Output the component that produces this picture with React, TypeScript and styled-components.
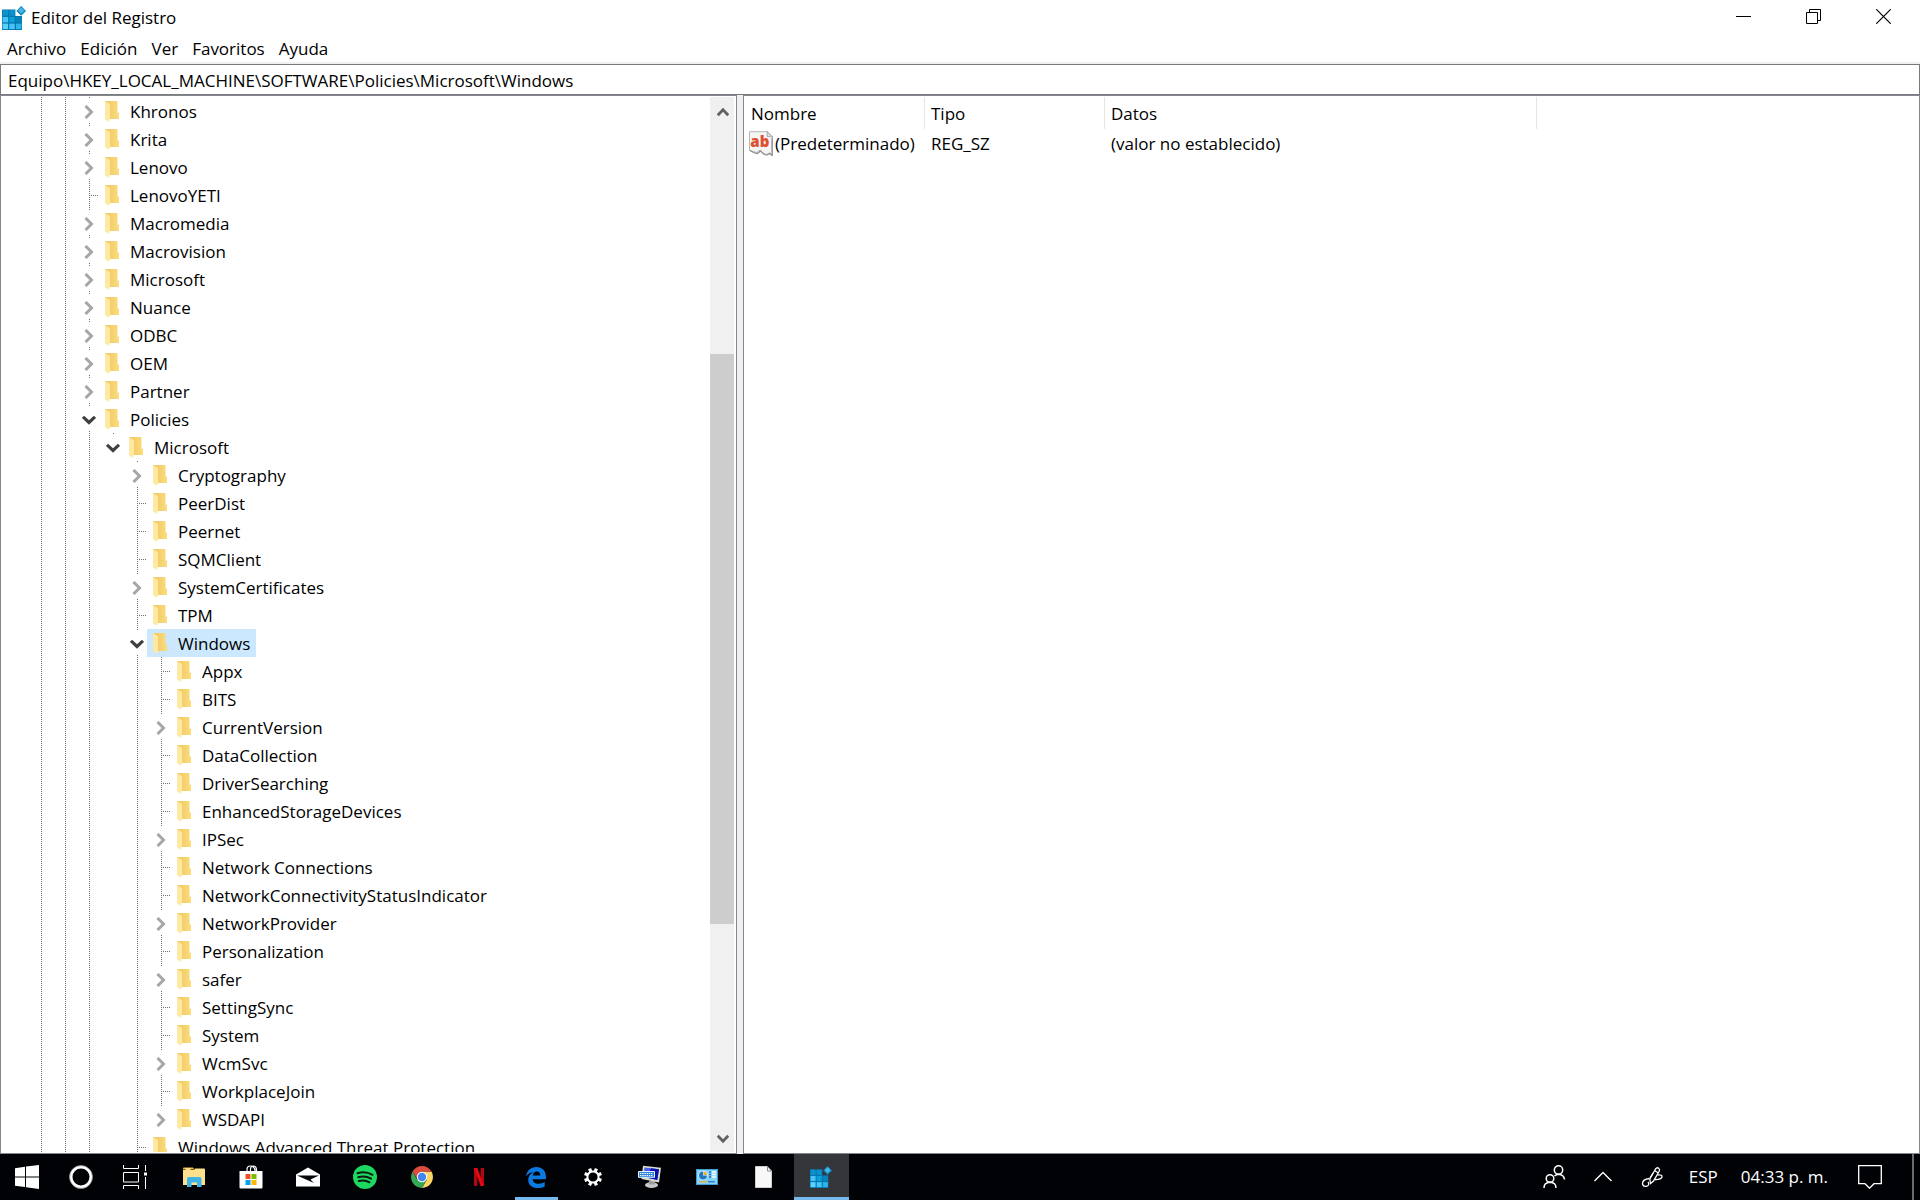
import React from "react";
import styled, { createGlobalStyle, css } from "styled-components";

const GlobalStyle = createGlobalStyle`
  *, *::before, *::after { box-sizing: border-box; }
  html, body, #root { height: 100%; }
  body {
    margin: 0;
    overflow: hidden;
    background: #fff;
    color: #000;
    font: 17px/24px "Open Sans", "Noto Sans", "Liberation Sans", sans-serif;
  }
  button, input { font: inherit; color: inherit; }
  button { border: 0; margin: 0; padding: 0; background: none; }
  svg { display: block; flex: none; }
`;

/* ---------- layout ---------- */

const Desktop = styled.div`
  display: flex;
  flex-direction: column;
  height: 100vh;
`;

const Window = styled.main`
  display: flex;
  flex-direction: column;
  flex: 1;
  min-height: 0;
`;

const TitleBar = styled.header`
  display: flex;
  align-items: center;
  gap: 5px;
  height: 35px;
  padding-left: 2px;
`;

const Title = styled.h1`
  flex: 1;
  margin: 0;
  font-size: 17px;
  font-weight: 400;
`;

const WindowControls = styled.div`
  display: flex;
  align-self: flex-start;
  padding-right: 2px;
`;

const ControlButton = styled.button`
  display: grid;
  place-items: center;
  width: 70px;
  height: 33px;
`;

const MenuBar = styled.nav`
  display: flex;
  align-items: center;
  height: 27px;
  padding-top: 1px;
`;

const MenuButton = styled.button`
  padding: 0 7px;
`;

const AddressRow = styled.div`
  padding-top: 2px;
  background: #f0f0f0;
`;

const AddressInput = styled.input`
  display: block;
  width: 100%;
  height: 31px;
  padding: 2px 7px 0;
  border: 1px solid #7a7a7a;
  border-radius: 0;
  background: #fff;
  outline: 0;
`;

const Panes = styled.div`
  display: grid;
  grid-template-columns: minmax(0, 737px) 6px minmax(0, 1fr);
  flex: 1;
  min-height: 0;
  background: #f0f0f0;
`;

const pane = css`
  min-height: 0;
  overflow: hidden;
  border: 1px solid #828790;
  background: #fff;
`;

const TreePane = styled.section`
  ${pane}
  display: flex;
  padding: 1px 2px 1px 0;
`;

const ValuesPane = styled.section`
  ${pane}
  grid-column: 3;
  padding-top: 1px;
`;

/* ---------- tree ---------- */

const Tree = styled.ul`
  flex: 1;
  min-width: 0;
  margin: 0;
  padding: 0 0 0 26px;
  overflow: hidden;
  list-style: none;
`;

const TreeRow = styled.li`
  display: flex;
  height: 28px;
`;

type GuideKind = "empty" | "through" | "branch" | "toggle" | "lastToggle";

const vDots = "repeating-linear-gradient(to bottom, #6e6e6e 0 1px, transparent 1px 2px)";
const hDots = "repeating-linear-gradient(to right, #6e6e6e 0 1px, transparent 1px 2px)";

const guides: Record<GuideKind, string> = {
  empty: "none",
  through: `${vDots} 14px 0 / 1px 28px no-repeat`,
  branch: `${vDots} 14px 0 / 1px 28px no-repeat, ${hDots} 16px 14px / 10px 1px no-repeat`,
  toggle: `${vDots} 14px 0 / 1px 2px no-repeat, ${vDots} 14px 26px / 1px 2px no-repeat`,
  lastToggle: `${vDots} 14px 0 / 1px 2px no-repeat`,
};

const Guide = styled.span<{ $kind: GuideKind }>`
  display: flex;
  flex: none;
  align-items: center;
  justify-content: center;
  width: 24px;
  padding: 1px 0 0 3px;
  background: ${(p) => guides[p.$kind]};
`;

const Toggle = styled.button`
  display: grid;
  place-items: center;
  width: 14px;
  height: 14px;
`;

const NodeButton = styled.button<{ $selected: boolean }>`
  display: flex;
  align-items: center;
  gap: 11px;
  height: 28px;
  padding: 0 6px;
  white-space: nowrap;
  background: ${(p) => (p.$selected ? "#cce8ff" : "transparent")};
`;

const NodeName = styled.span`
  padding-top: 2px;
`;

/* ---------- scrollbar ---------- */

const ScrollBar = styled.div`
  display: flex;
  flex-direction: column;
  width: 24px;
  background: #f0f0f0;
`;

const ScrollButton = styled.button`
  display: grid;
  place-items: center;
  height: 28px;
  padding: 1px 0 0 1px;
`;

const ScrollPart = styled.div<{ $size: number; $thumb?: boolean }>`
  flex: ${(p) => p.$size} 0 0;
  background: ${(p) => (p.$thumb ? "#cdcdcd" : "transparent")};
`;

/* ---------- values ---------- */

const ValuesTable = styled.table`
  width: 100%;
  table-layout: fixed;
  border-collapse: separate;
  border-spacing: 0;
  text-align: left;
`;

const Col = styled.col<{ $width?: number }>`
  width: ${(p) => (p.$width ? `${p.$width}px` : "auto")};
`;

const HeadCell = styled.th`
  height: 32px;
  padding: 2px 6px 0;
  border-right: 1px solid #e5e5e5;
  font-weight: 400;
  &:first-child { padding-left: 7px; }
  &:last-child { border-right: 0; }
`;

const Cell = styled.td`
  height: 29px;
  padding: 0 6px;
  white-space: nowrap;
`;

const NameCell = styled(Cell)`
  padding: 0 0 0 5px;
`;

const ValueName = styled.span`
  display: flex;
  align-items: center;
  gap: 1px;
`;

/* ---------- taskbar ---------- */

const TaskBar = styled.footer`
  display: flex;
  flex: none;
  height: 46px;
  background: #010206;
  color: #fff;
`;

const SystemButton = styled.button`
  display: grid;
  place-items: center;
  width: 54px;
`;

const Apps = styled.div`
  display: flex;
  flex: 1;
  gap: 2px;
  padding-left: 5px;
`;

const AppButton = styled.button<{ $state?: "open" | "active" }>`
  display: grid;
  place-items: center;
  width: 55px;
  padding-right: 2px;
  background:
    linear-gradient(#76b9ed, #76b9ed) center bottom /
      ${(p) => (p.$state === "active" ? "100% 3px" : p.$state === "open" ? "43px 3px" : "0 0")} no-repeat,
    ${(p) => (p.$state === "active" ? "#35363a" : "transparent")};
`;

const Tray = styled.div`
  display: flex;
`;

const TrayButton = styled.button`
  display: flex;
  align-items: center;
  padding: 0 14px;
`;

const TrayText = styled.button`
  padding: 0 0 0 11px;
`;

const Language = styled(TrayText)`
  padding-right: 12px;
`;

const NotificationButton = styled.button`
  display: grid;
  place-items: center;
  width: 84px;
`;

const ShowDesktop = styled.button`
  width: 8px;
  border-left: 2px solid #6b6b6b;
`;

/* ---------- icons ---------- */

const FolderIcon = () => (
  <svg width="14" height="21" viewBox="0 0 14 21" aria-hidden="true">
    <defs>
      <linearGradient id="folderBack" x1="0" x2="1">
        <stop offset="0" stopColor="#efc75e" />
        <stop offset="1" stopColor="#fbdc7e" />
      </linearGradient>
    </defs>
    <path d="M0 0h12.5v11.5H14V18H0z" fill="url(#folderBack)" />
    <path d="M0 0 5 3.2V16.5L4 21 0 18z" fill="#ffe9a2" />
  </svg>
);

const CollapsedIcon = () => (
  <svg width="10" height="14" viewBox="0 0 10 14" aria-hidden="true">
    <path d="M1.5 1 7.5 7l-6 6" fill="none" stroke="#a6a6a6" strokeWidth="3" />
  </svg>
);

const ExpandedIcon = () => (
  <svg width="14" height="10" viewBox="0 0 14 10" aria-hidden="true">
    <path d="M1 1.8 7 7.5l6-5.7" fill="none" stroke="#404040" strokeWidth="3.2" />
  </svg>
);

const ScrollArrow = ({ down }: { down?: boolean }) => (
  <svg width="12" height="10" viewBox="0 0 12 10" aria-hidden="true">
    <path d={down ? "M.8 1.8 6 7.2l5.2-5.4" : "M.8 8.2 6 2.8l5.2 5.4"} fill="none" stroke="#606060" strokeWidth="2.8" />
  </svg>
);

const cubes = [
  [0, 4, "#0a93cf"], [6.7, 4, "#0a93cf"],
  [0, 10.7, "#45c4f5"], [6.7, 10.7, "#0aa0dc"], [13.4, 10.7, "#0683b8"],
  [0, 17.4, "#5ad0fa"], [6.7, 17.4, "#45c4f5"], [13.4, 17.4, "#2fb4e8"],
] as const;

const RegistryIcon = ({ size }: { size: number }) => (
  <svg width={size} height={size} viewBox="0 0 24 24" aria-hidden="true">
    <path d="M0 3.5h13.4v6.6H20V24H0z" fill="#0475ae" />
    {cubes.map(([x, y, fill]) => (
      <rect key={`${x}-${y}`} x={x + 0.6} y={y + 0.2} width="5.5" height="5.5" fill={fill} />
    ))}
    <path d="M19.2 0 24 4.9l-4.8 4.9-4.8-4.9z" fill="#0a84bd" />
    <path d="m19.2 1.2 3.3 3.4-3.3 3.2-3.3-3.2z" fill="#48b4e4" />
  </svg>
);

const StringValueIcon = () => (
  <svg width="25" height="25" viewBox="0 0 25 25" aria-hidden="true">
    <path d="M.5.7h17.7l5.3 5v18.6l-2.8-2.4-3 1.7-3.2-1.2-3.2-3.4-3.6 2.6-3.4-1.1L.5 19.6z" fill="#f5f5f5" stroke="#b5b5b5" />
    <path d="m1 19.5 3.5 2 3.8 1 3.2-2.5 3.2 3 3 1.2 3-1.8 2.3 2.2V7" fill="none" stroke="#8f8f8f" strokeWidth="1.2" />
    <path d="M18.2.7v5h5.3z" fill="#ddd" stroke="#9d9d9d" strokeWidth=".8" />
    <text x="10.8" y="15.5" textAnchor="middle" fontFamily="Open Sans, sans-serif" fontSize="15" fontWeight="800" fill="#dd5030">ab</text>
  </svg>
);

const StartIcon = () => (
  <svg width="24" height="24" viewBox="0 0 24 24" fill="#fff" aria-hidden="true">
    <path d="M0 3.2 10 1.8v9.7H0zM11 1.6 24 0v11.5H11zM0 12.5h10v9.6L0 20.7zM11 12.5h13V24l-13-1.7z" />
  </svg>
);

const CortanaIcon = () => (
  <svg width="24" height="24" viewBox="0 0 24 24" fill="none" aria-hidden="true">
    <circle cx="12" cy="12" r="10" stroke="#fff" strokeWidth="3" />
    <circle cx="12" cy="12" r="11.5" stroke="#8a8a8a" strokeWidth=".8" />
  </svg>
);

const TaskViewIcon = () => (
  <svg width="24" height="24" viewBox="0 0 24 24" fill="none" stroke="#fff" aria-hidden="true">
    <path d="M.5 0v3.500h15V0M.5 24v-3.500h15V24M.5 7.500h15v9.500H.5zM22.500 0v6M22.500 12v12" />
    <rect x="21" y="7.500" width="3" height="3" fill="#fff" stroke="none" />
  </svg>
);

const ExplorerIcon = () => (
  <svg width="22" height="20" viewBox="0 0 22 20" aria-hidden="true">
    <path d="M0 1.500Q0 .5 1 .5h9l1.500 2H0z" fill="#f5b921" />
    <rect x="2.500" y="1.300" width="5" height="1.500" fill="#fff3c4" />
    <path d="M0 3h11l1-1.500h9q1 0 1 1V18H0z" fill="#ffe08a" />
    <path d="M4 20v-8q0-2 2-2h10.500q2 0 2 2v8H14v-4.500H8.500V20z" fill="#3fb4e8" />
  </svg>
);

const StoreIcon = () => (
  <svg width="24" height="24" viewBox="0 0 24 24" aria-hidden="true">
    <path d="M8 7V4.500Q8 1 11.500 1T16 5v2M11.500 6V4q0-2.500 2.500-3 3.500 0 3.500 4v2" fill="none" stroke="#fff" strokeWidth="1.200" />
    <path d="M.5 6h23v16.500q0 1-1 1h-21q-1 0-1-1z" fill="#fff" />
    <path d="M6.500 9h5v5h-5z" fill="#f25022" />
    <path d="M12.500 9h5v5h-5z" fill="#7fba00" />
    <path d="M6.500 15h5v5h-5z" fill="#00a4ef" />
    <path d="M12.500 15h5v5h-5z" fill="#ffb900" />
  </svg>
);

const MailIcon = () => (
  <svg width="24" height="20" viewBox="0 0 24 20" aria-hidden="true">
    <path d="M0 7.500 12 .5l12 7V19.500H0z" fill="#fff" />
    <path d="M1 8.500h22L14.500 12.500 18 16z" fill="#05060a" />
  </svg>
);

const SpotifyIcon = () => (
  <svg width="24" height="24" viewBox="0 0 24 24" aria-hidden="true">
    <circle cx="12" cy="12" r="12" fill="#1ed760" />
    <path d="M4.500 8.200q8-2.300 15 1.600M5.200 12.200q7-2 12.800 1.500M5.800 16q6-1.500 10.700 1.300" fill="none" stroke="#0b1a10" strokeWidth="2" strokeLinecap="round" />
  </svg>
);

const ChromeIcon = () => (
  <svg width="22" height="22" viewBox="0 0 22 22" aria-hidden="true">
    <path d="M11 11V5.500h9.500A11 11 0 0 1 11 22l4.800-8.300z" fill="#fdd663" />
    <path d="M11 11 15.800 13.700 11 22A11 11 0 0 1 1.500 5.500L6.300 13.700z" fill="#34a853" />
    <path d="M1.500 5.500A11 11 0 0 1 20.500 5.500H11L6 12.500z" fill="#dd4b3e" />
    <circle cx="11" cy="11" r="5.200" fill="#fff" />
    <circle cx="11" cy="11" r="4.200" fill="#4285f4" />
  </svg>
);

const NetflixIcon = () => (
  <svg width="10" height="18" viewBox="0 0 10 18" aria-hidden="true">
    <path d="M0 0h3.300v18L0 18zM6.700 0H10v18H6.700z" fill="#b1060f" />
    <path d="M0 0h3.300L10 18H6.700z" fill="#e50914" />
  </svg>
);

const EdgeIcon = () => (
  <svg width="20" height="21" viewBox="0 0 20 21" aria-hidden="true">
    <path d="M0 9.300C.8 3.500 5 0 10.300 0 16.500 0 20 4.200 20 10v2.300H6.600c.2 3.200 2.900 4.500 5.900 4.500 2.300 0 4.400-.6 6.200-1.700v4.300C16.600 20.500 14.200 21 11.700 21 6 21 2.200 17.700 2.200 12.900c0-3.600 2-6.500 5.300-8C4.500 5.200 1.800 6.800 0 9.300zm6.800-.9h7.500c0-2.500-1.200-3.900-3.500-3.900-2.200 0-3.500 1.500-4 3.900z" fill="#0a7ae0" />
  </svg>
);

const SettingsIcon = () => (
  <svg width="20" height="20" viewBox="0 0 20 20" fill="none" stroke="#fff" aria-hidden="true">
    <circle cx="10" cy="10" r="5.600" strokeWidth="2" />
    {[22.5, 67.5, 112.5, 157.5, 202.5, 247.5, 292.5, 337.5].map((a) => (
      <path key={a} d="M10 1v3.200" strokeWidth="3.200" transform={`rotate(${a} 10 10)`} />
    ))}
  </svg>
);

const KeyboardIcon = () => (
  <svg width="24" height="24" viewBox="0 0 24 24" aria-hidden="true">
    <ellipse cx="13.500" cy="20" rx="6.500" ry="3" fill="#c9c9c9" />
    <path d="M11 16h6v3.500h-6z" fill="#9c9c9c" />
    <path d="m5 .8 18 2-2 14.700L3.500 14z" fill="#dddad0" />
    <path d="m6.500 2.500 14.500 1.700L19.300 15 5.500 12z" fill="#4a5cf0" />
    <path d="m13 3.300 8 .9L19.300 15l-10-2.200z" fill="#0a12a8" />
    <path d="M.5 6.500h16v5.800H.5z" fill="#2c86d8" stroke="#e8f3ff" />
    <path d="M2 8.500h13M2 10.500h13" stroke="#fff" strokeWidth="1.200" strokeDasharray="1.400 .8" />
  </svg>
);

const ControlPanelIcon = () => (
  <svg width="22" height="16" viewBox="0 0 22 16" aria-hidden="true">
    <rect x=".5" y=".5" width="21" height="15" fill="#86d3fa" stroke="#3d9fd8" />
    <circle cx="7" cy="6.500" r="4.800" fill="#d9f1ff" />
    <path d="M7 6.500V2.500a4 4 0 0 0 0 8 4 4 0 0 0 4-4z" fill="#2178c4" />
    <path d="M7.500 2.500a4 4 0 0 1 3.500 3.500H7.500z" fill="#f7a823" />
    <path d="M13 3h2M13 5.500h2M13 8h2" stroke="#1f6fb8" strokeWidth="1.400" />
    <path d="M16 3h4M16 5.500h4M16 8h4" stroke="#fff" strokeWidth="1.400" />
    <path d="M3 12.800h8" stroke="#f7a823" strokeWidth="1.200" />
    <path d="M12 12.800h7" stroke="#1f6fb8" strokeWidth="1.200" />
  </svg>
);

const DocumentIcon = () => (
  <svg width="17" height="22" viewBox="0 0 17 22" aria-hidden="true">
    <path d="M.5.5h12l4 4.500v16.500H.5z" fill="#f8f8f8" stroke="#cfcfcf" />
    <path d="M12.500.5v4.500h4z" fill="#fff" stroke="#7d7d7d" strokeWidth=".9" />
  </svg>
);

const PeopleIcon = () => (
  <svg width="24" height="24" viewBox="0 0 24 24" fill="none" stroke="#fff" strokeWidth="1.500" aria-hidden="true">
    <circle cx="16.500" cy="5" r="4.200" />
    <circle cx="8" cy="13.500" r="3.800" />
    <path d="M2 23q0-5.500 6-5.700Q14 17.500 14 23M12.500 11q2-1.800 4-1.800 5.500.3 6 5.300" />
  </svg>
);

const ChevronUpIcon = () => (
  <svg width="18" height="12" viewBox="0 0 18 12" fill="none" stroke="#fff" strokeWidth="1.400" aria-hidden="true">
    <path d="m.5 10 8.500-8.500 8.500 8.500" />
  </svg>
);

const PenIcon = () => (
  <svg width="24" height="24" viewBox="0 0 24 24" fill="none" stroke="#fff" strokeWidth="1.300" aria-hidden="true">
    <path d="M10.500 18.500 9.800 14 15.500 4q1.500-2 3.200-.8 1.500 1.200.5 3L13.500 16z" />
    <path d="M14.500 5.500 18 7.700M13 8l-3 5" />
    <path d="M9.500 13.500C5 14 2.500 16 2.500 18.500c0 3 4.500 4 6 1.500.6-1 .3-2-.5-3M17.500 10c3.500-.5 5 .5 4.500 2-.6 1.800-4 2.700-7.500 2.500" />
  </svg>
);

const NotificationIcon = () => (
  <svg width="24" height="24" viewBox="0 0 24 24" fill="none" stroke="#fff" strokeWidth="1.300" aria-hidden="true">
    <path d="M.7.700h22.600v18H16l-4.500 4.500-4.500-4.500H.7z" />
  </svg>
);

/* ---------- data ---------- */

interface KeyNode {
  name: string;
  depth: number;
  state?: "closed" | "open";
}

const sub = (depth: number, names: string): KeyNode[] =>
  names.split("|").map((raw) => {
    const mark = raw[0];
    if (mark === "+") return { name: raw.slice(1), depth, state: "closed" };
    if (mark === "-") return { name: raw.slice(1), depth, state: "open" };
    return { name: raw, depth };
  });

/* "+" marks a collapsed key, "-" an expanded one. */
const keys: KeyNode[] = [
  ...sub(2, "+Khronos|+Krita|+Lenovo|LenovoYETI|+Macromedia|+Macrovision|+Microsoft|+Nuance|+ODBC|+OEM|+Partner|-Policies"),
  ...sub(3, "-Microsoft"),
  ...sub(4, "+Cryptography|PeerDist|Peernet|SQMClient|+SystemCertificates|TPM|-Windows"),
  ...sub(
    5,
    "Appx|BITS|+CurrentVersion|DataCollection|DriverSearching|EnhancedStorageDevices|+IPSec|Network Connections|NetworkConnectivityStatusIndicator|+NetworkProvider|Personalization|+safer|SettingSync|System|+WcmSvc|WorkplaceJoin|+WSDAPI"
  ),
  ...sub(4, "Windows Advanced Threat Protection"),
];

/* Levels whose last child has been shown carry no line further down. */
const isLast = (i: number) => {
  const { depth } = keys[i];
  if (depth === 3) return true;
  if (depth < 5) return false;
  return keys[i + 1].depth < depth;
};

const guidesFor = (i: number): GuideKind[] => {
  const { depth, state } = keys[i];
  const out: GuideKind[] = [];
  for (let level = 0; level < depth; level++) out.push(level === 3 ? "empty" : "through");
  out.push(state ? (isLast(i) ? "lastToggle" : "toggle") : "branch");
  return out;
};

const SELECTED = 19;

const apps: { label: string; icon: React.ReactNode; state?: "open" | "active" }[] = [
  { label: "Explorador de archivos", icon: <ExplorerIcon /> },
  { label: "Microsoft Store", icon: <StoreIcon /> },
  { label: "Correo", icon: <MailIcon /> },
  { label: "Spotify", icon: <SpotifyIcon /> },
  { label: "Google Chrome", icon: <ChromeIcon /> },
  { label: "Netflix", icon: <NetflixIcon /> },
  { label: "Microsoft Edge", icon: <EdgeIcon />, state: "open" },
  { label: "Configuración", icon: <SettingsIcon /> },
  { label: "Teclado en pantalla", icon: <KeyboardIcon /> },
  { label: "Panel de control", icon: <ControlPanelIcon /> },
  { label: "Documento", icon: <DocumentIcon /> },
  { label: "Editor del Registro", icon: <RegistryIcon size={22} />, state: "active" },
];

export default function App() {
  return (
    <Desktop>
      <GlobalStyle />
      <Window>
        <TitleBar>
          <RegistryIcon size={24} />
          <Title>Editor del Registro</Title>
          <WindowControls>
            <ControlButton aria-label="Minimizar">
              <svg width="15" height="15" viewBox="0 0 15 15" stroke="#000" aria-hidden="true">
                <path d="M0 7.500h15" />
              </svg>
            </ControlButton>
            <ControlButton aria-label="Restaurar">
              <svg width="15" height="15" viewBox="0 0 15 15" fill="none" stroke="#000" aria-hidden="true">
                <path d="M.5 3.500h11v11H.5zM3.500 3.500v-3h11v11h-3" />
              </svg>
            </ControlButton>
            <ControlButton aria-label="Cerrar">
              <svg width="15" height="15" viewBox="0 0 15 15" stroke="#000" strokeWidth="1.200" aria-hidden="true">
                <path d="m.3.300 14.400 14.400M14.700.300.300 14.700" />
              </svg>
            </ControlButton>
          </WindowControls>
        </TitleBar>

        <MenuBar>
          {["Archivo", "Edición", "Ver", "Favoritos", "Ayuda"].map((m) => (
            <MenuButton key={m}>{m}</MenuButton>
          ))}
        </MenuBar>

        <AddressRow>
          <AddressInput
            aria-label="Ruta de la clave"
            defaultValue={"Equipo\\HKEY_LOCAL_MACHINE\\SOFTWARE\\Policies\\Microsoft\\Windows"}
          />
        </AddressRow>

        <Panes>
          <TreePane>
            <Tree role="tree" aria-label="Claves">
              {keys.map((k, i) => (
                <TreeRow
                  key={i}
                  role="treeitem"
                  aria-level={k.depth + 1}
                  aria-selected={i === SELECTED}
                  aria-expanded={k.state ? k.state === "open" : undefined}
                >
                  {guidesFor(i).map((kind, level) => (
                    <Guide key={level} $kind={kind}>
                      {level === k.depth && k.state && (
                        <Toggle aria-label={k.state === "open" ? "Contraer" : "Expandir"}>
                          {k.state === "open" ? <ExpandedIcon /> : <CollapsedIcon />}
                        </Toggle>
                      )}
                    </Guide>
                  ))}
                  <NodeButton $selected={i === SELECTED}>
                    <FolderIcon />
                    <NodeName>{k.name}</NodeName>
                  </NodeButton>
                </TreeRow>
              ))}
            </Tree>
            <ScrollBar>
              <ScrollButton aria-label="Subir">
                <ScrollArrow />
              </ScrollButton>
              <ScrollPart $size={229} />
              <ScrollPart $size={570} $thumb />
              <ScrollPart $size={200} />
              <ScrollButton aria-label="Bajar">
                <ScrollArrow down />
              </ScrollButton>
            </ScrollBar>
          </TreePane>

          <ValuesPane>
            <ValuesTable>
              <colgroup>
                <Col $width={181} />
                <Col $width={180} />
                <Col $width={432} />
                <Col />
              </colgroup>
              <thead>
                <tr>
                  <HeadCell>Nombre</HeadCell>
                  <HeadCell>Tipo</HeadCell>
                  <HeadCell>Datos</HeadCell>
                  <HeadCell aria-hidden="true" />
                </tr>
              </thead>
              <tbody>
                <tr>
                  <NameCell>
                    <ValueName>
                      <StringValueIcon />
                      (Predeterminado)
                    </ValueName>
                  </NameCell>
                  <Cell>REG_SZ</Cell>
                  <Cell>(valor no establecido)</Cell>
                  <Cell />
                </tr>
              </tbody>
            </ValuesTable>
          </ValuesPane>
        </Panes>
      </Window>

      <TaskBar>
        <SystemButton aria-label="Inicio">
          <StartIcon />
        </SystemButton>
        <SystemButton aria-label="Cortana">
          <CortanaIcon />
        </SystemButton>
        <SystemButton aria-label="Vista de tareas">
          <TaskViewIcon />
        </SystemButton>
        <Apps>
          {apps.map((a) => (
            <AppButton key={a.label} aria-label={a.label} $state={a.state}>
              {a.icon}
            </AppButton>
          ))}
        </Apps>
        <Tray>
          <TrayButton aria-label="Contactos">
            <PeopleIcon />
          </TrayButton>
          <TrayButton aria-label="Mostrar iconos ocultos">
            <ChevronUpIcon />
          </TrayButton>
          <TrayButton aria-label="Windows Ink">
            <PenIcon />
          </TrayButton>
          <Language>ESP</Language>
          <TrayText>04:33 p. m.</TrayText>
          <NotificationButton aria-label="Notificaciones">
            <NotificationIcon />
          </NotificationButton>
          <ShowDesktop aria-label="Mostrar escritorio" />
        </Tray>
      </TaskBar>
    </Desktop>
  );
}
